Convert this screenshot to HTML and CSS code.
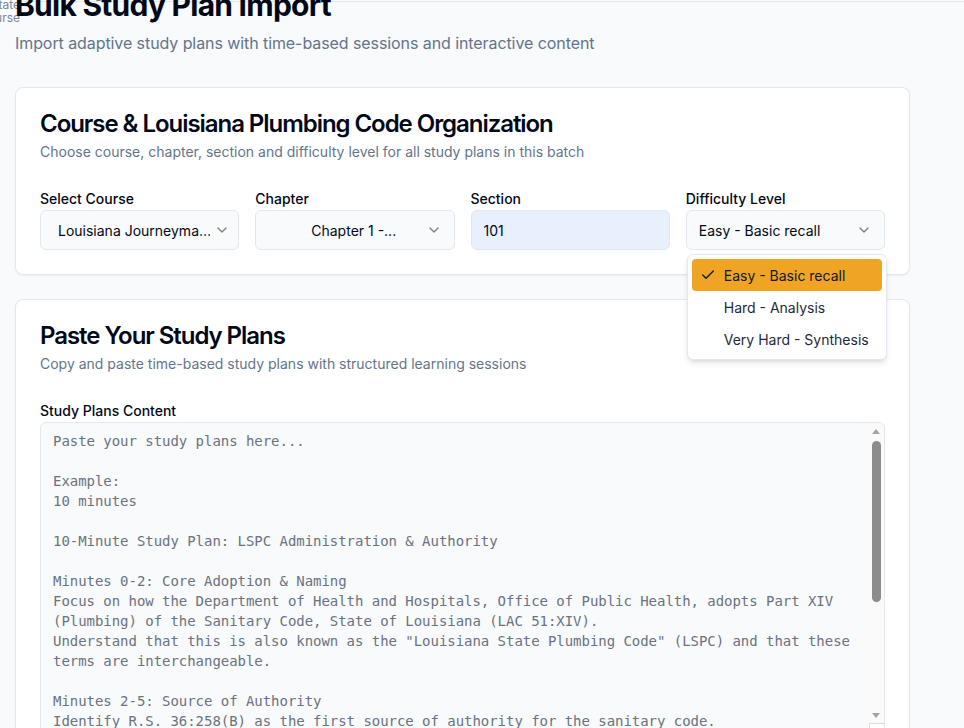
FILE: index.html
```html
<!DOCTYPE html>
<html lang="en">
<head>
<meta charset="utf-8">
<title>Bulk Study Plan Import</title>
<link rel="stylesheet" href="styles.css">
</head>
<body>
<div class="ghost-nav"><span>State</span><span>Course</span></div>
<div class="topline"></div>
<main class="page">
  <h1 class="page-title">Bulk Study Plan Import</h1>
  <p class="page-sub">Import adaptive study plans with time-based sessions and interactive content</p>

  <section class="card">
    <div class="card-header">
      <h2 class="card-title">Course &amp; Louisiana Plumbing Code Organization</h2>
      <p class="card-desc">Choose course, chapter, section and difficulty level for all study plans in this batch</p>
    </div>
    <div class="card-content">
      <div class="grid4">
        <div class="field">
          <label class="label">Select Course</label>
          <div class="trigger trigger-course">
            <span class="val">Louisiana Journeyma…</span>
            <svg class="chev" viewBox="0 0 24 24"><path d="m6 9 6 6 6-6"/></svg>
          </div>
        </div>
        <div class="field">
          <label class="label">Chapter</label>
          <div class="trigger trigger-chapter">
            <span class="val">Chapter 1 -...</span>
            <svg class="chev" viewBox="0 0 24 24"><path d="m6 9 6 6 6-6"/></svg>
          </div>
        </div>
        <div class="field">
          <label class="label">Section</label>
          <div class="trigger trigger-input">
            <span class="val">101</span>
          </div>
        </div>
        <div class="field field-menu">
          <label class="label">Difficulty Level</label>
          <div class="trigger trigger-diff">
            <span class="val">Easy - Basic recall</span>
            <svg class="chev" viewBox="0 0 24 24"><path d="m6 9 6 6 6-6"/></svg>
          </div>
          <div class="menu">
            <div class="item active">
              <svg class="check" viewBox="0 0 24 24"><path d="M20 6 9 17l-5-5"/></svg>
              <span>Easy - Basic recall</span>
            </div>
            <div class="item"><span>Hard - Analysis</span></div>
            <div class="item"><span>Very Hard - Synthesis</span></div>
          </div>
        </div>
      </div>
    </div>
  </section>

  <section class="card card-paste">
    <div class="card-header">
      <h2 class="card-title">Paste Your Study Plans</h2>
      <p class="card-desc">Copy and paste time-based study plans with structured learning sessions</p>
    </div>
    <div class="card-content">
      <label class="label" for="plans">Study Plans Content</label>
      <div class="plans-wrap">
        <textarea id="plans" class="plans" wrap="off" spellcheck="false">Paste your study plans here...

Example:
10 minutes

10-Minute Study Plan: LSPC Administration &amp; Authority

Minutes 0-2: Core Adoption &amp; Naming
Focus on how the Department of Health and Hospitals, Office of Public Health, adopts Part XIV
(Plumbing) of the Sanitary Code, State of Louisiana (LAC 51:XIV).
Understand that this is also known as the "Louisiana State Plumbing Code" (LSPC) and that these
terms are interchangeable.

Minutes 2-5: Source of Authority
Identify R.S. 36:258(B) as the first source of authority for the sanitary code.
Review R.S. 40:4(A)(7) and R.S. 40:5 as additional statutory authority.

Minutes 5-8: Scope &amp; Application
Learn which buildings and plumbing systems fall under the code.
Note the exceptions and the role of the State Health Officer.

Minutes 8-10: Review
Summarize the adoption, naming and authority of the LSPC.
Quiz yourself on the key citations.</textarea>
        <div class="vscroll" aria-hidden="true">
          <span class="arrow arrow-up"></span>
          <span class="thumb"></span>
          <span class="arrow arrow-down"></span>
        </div>
        <div class="scroll-corner" aria-hidden="true"></div>
      </div>
    </div>
  </section>
</main>
</body>
</html>
```
FILE: styles.css
```css
* { box-sizing: border-box; }

html, body {
  margin: 0;
  padding: 0;
  background: #f8fafc;
  font-family: Inter, "Noto Sans", "Liberation Sans", sans-serif;
  color: #020817;
  overflow: hidden;
}

.ghost-nav {
  position: absolute;
  top: -2px;
  right: calc(100% - 20px);
  display: flex;
  flex-direction: column;
  align-items: flex-end;
  font-size: 12px;
  line-height: 13px;
  color: #7c8799;
  z-index: 0;
}

.topline {
  position: absolute;
  top: 1px;
  left: 20px;
  right: 0;
  height: 1px;
  background: #e5e7eb;
  z-index: 0;
}

.page {
  position: relative;
  z-index: 1;
  width: 910px;
  padding: 0 0 0 15px;
  margin-top: -13px;
}

.page-title {
  margin: 0;
  font-size: 30px;
  line-height: 36px;
  font-weight: 700;
  letter-spacing: -0.75px;
  color: #020817;
}

.page-sub {
  margin: 8px 0 32px;
  font-size: 16px;
  line-height: 24px;
  letter-spacing: -0.08px;
  color: #64748b;
}

.card {
  background: #ffffff;
  border: 1px solid #e2e8f0;
  border-radius: 8px;
  box-shadow: 0 1px 2px rgba(0, 0, 0, 0.05);
  margin-bottom: 24px;
}

.card-header {
  padding: 24px 24px 27px;
  display: flex;
  flex-direction: column;
  gap: 6px;
}

.card-title {
  margin: 0;
  font-size: 24px;
  line-height: 24px;
  font-weight: 600;
  letter-spacing: -1.05px;
}

.card-desc {
  margin: 0;
  font-size: 14px;
  line-height: 20px;
  color: #64748b;
}

.card-content {
  padding: 0 24px 24px;
}

.grid4 {
  display: grid;
  grid-template-columns: repeat(4, minmax(0, 1fr));
  gap: 16px;
}

.field {
  position: relative;
  display: flex;
  flex-direction: column;
  gap: 1px;
  min-width: 0;
}

.label {
  display: block;
  font-size: 14px;
  line-height: 20px;
  font-weight: 500;
  color: #020817;
}

.trigger {
  height: 40px;
  display: flex;
  align-items: center;
  border: 1px solid #e2e8f0;
  border-radius: 6px;
  background: #f8fafc;
  font-size: 14px;
  color: #020817;
  padding: 0 12px;
}

.trigger .val {
  flex: 1;
  min-width: 0;
  white-space: nowrap;
  overflow: hidden;
}

.chev {
  width: 16px;
  height: 16px;
  flex: none;
  fill: none;
  stroke: #020817;
  stroke-width: 2;
  stroke-linecap: round;
  stroke-linejoin: round;
  opacity: 0.5;
}

.trigger-course { padding-left: 17px; }
.trigger-course .val { flex: none; width: 152px; margin-right: 4px; }

.trigger-chapter { padding-left: 55px; }

.trigger-input {
  background: #e8f0fe;
  padding-left: 12px;
}

.trigger-diff { padding-left: 12px; }

.menu {
  position: absolute;
  top: calc(100% + 4px);
  left: 1px;
  width: 200px;
  background: #ffffff;
  border: 1px solid #e2e8f0;
  border-radius: 6px;
  box-shadow: 0 4px 6px -1px rgba(0, 0, 0, 0.1), 0 2px 4px -2px rgba(0, 0, 0, 0.1);
  padding: 4px;
  z-index: 5;
}

.item {
  position: relative;
  height: 32px;
  display: flex;
  align-items: center;
  padding-left: 32px;
  border-radius: 4px;
  font-size: 14px;
  color: #1e293b;
}

.item.active {
  background: #efa424;
  color: #111827;
}

.check {
  position: absolute;
  left: 8px;
  top: 8px;
  width: 16px;
  height: 16px;
  fill: none;
  stroke: #111827;
  stroke-width: 2;
  stroke-linecap: round;
  stroke-linejoin: round;
}

.card-paste .label { margin-bottom: 1px; }

.plans-wrap {
  position: relative;
}

.plans {
  display: block;
  width: 100%;
  height: 317px;
  margin: 0;
  padding: 8px 12px;
  border: 1px solid #e2e8f0;
  border-radius: 6px;
  background: #f8fafc;
  font-family: "DejaVu Sans Mono", "Liberation Mono", monospace;
  font-size: 14px;
  line-height: 20px;
  letter-spacing: -0.04px;
  color: #6b7280;
  resize: none;
  overflow: hidden;
  white-space: pre;
  outline: none;
}

.vscroll {
  position: absolute;
  top: 1px;
  right: 1px;
  width: 15px;
  height: 300px;
  background: #fafafa;
  border-top-right-radius: 5px;
}

.arrow {
  position: absolute;
  left: 3px;
  width: 0;
  height: 0;
  border-left: 4.5px solid transparent;
  border-right: 4.5px solid transparent;
}

.arrow-up {
  top: 6px;
  border-bottom: 5px solid #a3a3a3;
}

.arrow-down {
  bottom: 5px;
  border-top: 5px solid #a3a3a3;
}

.thumb {
  position: absolute;
  top: 18px;
  left: 3px;
  width: 9px;
  height: 161px;
  border-radius: 4.5px;
  background: #8c8c8c;
}

.scroll-corner {
  position: absolute;
  top: 301px;
  right: 1px;
  width: 15px;
  height: 15px;
  background: #ffffff;
  border-top: 1px solid #dcdcdc;
  border-left: 1px solid #dcdcdc;
}
```
